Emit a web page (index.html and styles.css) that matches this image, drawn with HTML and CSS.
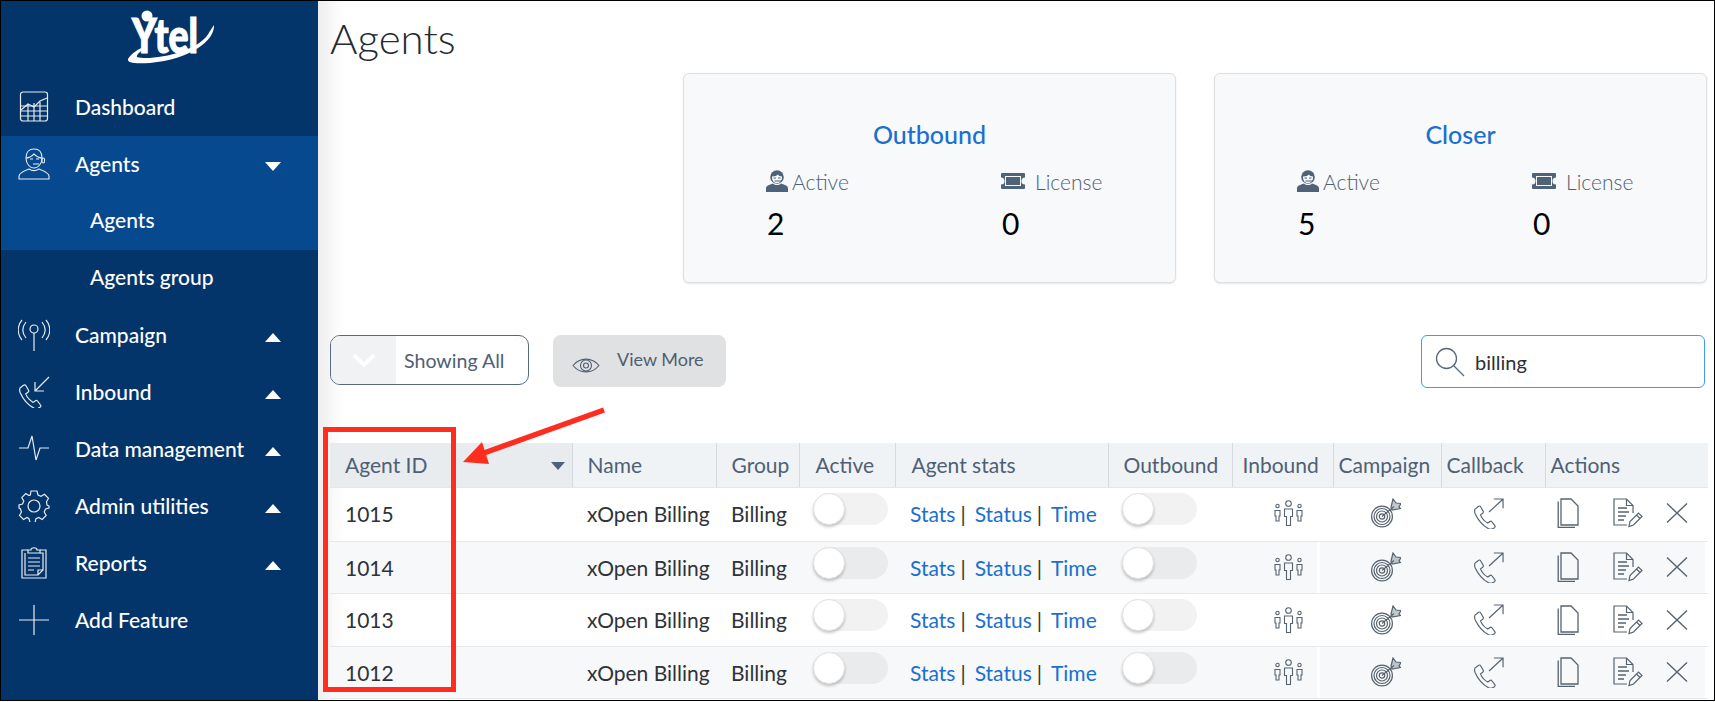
FILE: index.html
```html
<!DOCTYPE html>
<html lang="en">
<head>
<meta charset="utf-8">
<title>Agents</title>
<link rel="stylesheet" href="styles.css">
</head>
<body>
<svg class="sprite" aria-hidden="true">
  <symbol id="i-people" viewBox="0 0 30 26"><g fill="none" stroke="currentColor" stroke-width="1.100"><circle cx="14.500" cy="3.500" r="2.800"/><path d="M10.500 9h8v7.500h-2v9h-4v-9h-2z"/><circle cx="3.500" cy="6" r="1.700"/><path d="M1 10.500h5v5.500H5v5H2v-5H1z"/><circle cx="25.500" cy="6" r="1.700"/><path d="M23 10.500h5v5.500h-1v5h-3v-5h-1z"/></g></symbol>
  <symbol id="i-target" viewBox="0 0 30 30"><g fill="none" stroke="currentColor" stroke-width="1.200"><circle cx="11" cy="18.500" r="10.400"/><circle cx="11" cy="18.500" r="8"/><circle cx="11" cy="18.500" r="5.500"/><circle cx="11" cy="18.500" r="2.700"/><path d="M11 18.500L23 8.500"/><path d="M20 9l2-8 3 4 5 .5-2 3.500 1.500 1.500-8.500 1.500z" fill="currentColor" fill-opacity=".35"/></g></symbol>
  <symbol id="i-callout" viewBox="0 0 32 32"><g fill="none" stroke="currentColor" stroke-width="1.200"><path d="M1.500 11.500l3.500-2.800c1-.7 2-.5 2.500.5l2.500 4.500c.4.800.2 1.500-.5 2l-2.300 1.700c1 2.500 4 6.500 7.500 8.500l2.300-1.700c.7-.5 1.500-.4 2 .3l3 4c.5.800.4 1.600-.3 2.100l-2 1.200c-1 .7-2.500.7-4 0-6-3-11-9-14-15.500-.7-2-.7-3.500-.2-4.800z"/><path d="M16 14.500L30 1.500M21 1h9.500v9.500"/></g></symbol>
  <symbol id="i-copy" viewBox="0 0 23 30"><g fill="none" stroke="currentColor" stroke-width="1.300"><path d="M4 1h10l7 7v19H4z"/><path d="M1.200 3.500v25.800H18"/></g></symbol>
  <symbol id="i-edit" viewBox="0 0 30 30"><g fill="none" stroke="currentColor" stroke-width="1.200"><path d="M20 15V7.500L13.500 1H1v26h13"/><path d="M13.500 1v6.500H20"/><path d="M5 10h9M5 14h11M5 18h8M5 22h6" stroke-width="1.400"/><path d="M16 28.500l1-5 8.500-8.500 3.500 3.500-8.500 8.500zM23.500 17l3.500 3.500"/></g></symbol>
  <symbol id="i-close" viewBox="0 0 22 20"><path d="M1 .5l20 19M21 .5l-20 19" fill="none" stroke="currentColor" stroke-width="1.400"/></symbol>
  <symbol id="i-agent-solid" viewBox="0 0 22 22"><circle cx="11" cy="7" r="6.800" fill="currentColor"/><path d="M6 6.500c3 0 5-1 6-2 .5 1 2 2 4 2 .3 4-1.500 6.500-5 6.500S6 10.500 6 6.500z" fill="#f8f9fb"/><path d="M7.500 8h2.500M12 8h2.500M8.500 11h7.500" stroke="currentColor" fill="none"/><path d="M0 22v-3.500c0-3 3-3.500 7-5 2 2 6 2 8 0 4 1.500 7 2 7 5V22z" fill="currentColor"/></symbol>
  <symbol id="i-ticket" viewBox="0 0 24 16"><path fill-rule="evenodd" d="M1 0h22a1 1 0 011 1v3.500a2 2 0 000 7V15a1 1 0 01-1 1H1a1 1 0 01-1-1v-3.500a2 2 0 000-7V1a1 1 0 011-1zM4 3v10h16V3z" fill="currentColor"/><rect x="5" y="4" width="14" height="8" fill="currentColor"/></symbol>
</svg>

<div class="frame">
  <aside class="sidebar">
    <div class="logo">
      <svg width="100" height="70" viewBox="120 0 100 70">
        <circle cx="147" cy="15" r="5.500" fill="#fff"/>
        <text x="132" y="52" textLength="66" lengthAdjust="spacingAndGlyphs" class="logo-word">Ytel</text>
        <path d="M128 58c4-6 10-10 18-13v2c-6 3-10 7-9 9 13 4 63-4 73-26l4-6c1 16-24 34-64 38-15 1-23 0-22-4z" fill="#fff"/>
      </svg>
    </div>
    <nav class="nav">
      <a class="nav-item"><svg class="nav-icon" viewBox="0 0 32 32"><g fill="none" stroke="currentColor" stroke-width="1.200"><rect x="2.500" y="1" width="27" height="29" rx="2.500"/><path d="M3 15h26M3 20h26M3 25h26M10 13v17M16 12v18M22 11v19"/><path d="M3 19l7-6 6 3 6-6 7-3"/></g></svg><span>Dashboard</span></a>
      <div class="nav-open">
        <a class="nav-item"><svg class="nav-icon" viewBox="0 0 32 32"><g fill="none" stroke="currentColor" stroke-width="1.100"><path d="M8 10c0-6 3-9 8-9s8 3 8 9c0 6-4 10-8 10s-8-4-8-10z"/><path d="M8 10c4 0 6-2 8-4 2 2 4 4 8 4"/><path d="M12 11h3M18 11h3M15 16h6"/><rect x="24" y="10" width="2.500" height="5" rx="1.200"/><path d="M1 31v-3c0-3 5-5 10-7 3 2 7 2 10 0 5 2 10 4 10 7v3z"/></g></svg><span>Agents</span><i class="caret caret-down"></i></a>
        <a class="nav-item nav-sub"><span>Agents</span></a>
      </div>
      <a class="nav-item nav-sub"><span>Agents group</span></a>
      <a class="nav-item"><svg class="nav-icon" viewBox="0 0 32 32"><g fill="none" stroke="currentColor" stroke-width="1.200"><circle cx="16" cy="10" r="4"/><path d="M16 14v18M8 3C4 8 4 14 8 19M24 3c4 5 4 11 0 16M4 1C-1 7-1 15 4 21M28 1c5 6 5 14 0 20"/></g></svg><span>Campaign</span><i class="caret caret-up"></i></a>
      <a class="nav-item"><svg class="nav-icon" viewBox="0 0 32 32"><g fill="none" stroke="currentColor" stroke-width="1.200"><path d="M2 12l3.500-2.800c1-.7 2-.5 2.500.5l2.500 4.500c.4.800.2 1.500-.5 2l-2.300 1.700c1 2.500 4 6.500 7.500 8.500l2.300-1.700c.7-.5 1.500-.4 2 .3l3 4c.5.800.4 1.600-.3 2.100l-2 1.200c-1 .7-2.500.7-4 0-6-3-11-9-14-15.500-.7-2-.7-3.500-.2-4.800z"/><path d="M31 1L17 15M17 6v9h9"/></g></svg><span>Inbound</span><i class="caret caret-up"></i></a>
      <a class="nav-item"><svg class="nav-icon" viewBox="0 0 32 32"><path d="M1 15h9l4-12 4 24 4-12h9" fill="none" stroke="currentColor" stroke-width="1.200"/></svg><span>Data management</span><i class="caret caret-up"></i></a>
      <a class="nav-item"><svg class="nav-icon" viewBox="0 0 32 32"><g fill="none" stroke="currentColor" stroke-width="1.200"><circle cx="16" cy="16" r="6"/><path d="M13 1h6l1 4 3 1.300 3.500-2 4 4-2 3.500L29 15l2 1v0l0 2-3.500 1-1.300 3 2 3.500-4 4-3.500-2-2.700 1.200-1 3.800h-5l-1-3.800L9 27.500l-3.500 2-4-4 2-3.500L2.500 19 1 18v-3l3.500-1 1.300-3-2-3.500 4-4L11 5.500l1.300-.5z"/></g></svg><span>Admin utilities</span><i class="caret caret-up"></i></a>
      <a class="nav-item"><svg class="nav-icon" viewBox="0 0 32 32"><g fill="none" stroke="currentColor" stroke-width="1.200"><path d="M10 3H4v28h24V3h-6"/><path d="M7 6v22h13l5-5V6h-3"/><path d="M10 6V3h3c0-3 6-3 6 0h3v3z"/><path d="M10 11h12M10 15h12M10 19h12M10 23h6M20 28v-5h5"/></g></svg><span>Reports</span><i class="caret caret-up"></i></a>
      <a class="nav-item"><svg class="nav-icon" viewBox="0 0 32 32"><path d="M16 1v30M1 16h30" fill="none" stroke="currentColor" stroke-width="1.200"/></svg><span>Add Feature</span></a>
    </nav>
  </aside>

  <main class="main">
    <h1 class="title">Agents</h1>
    <section class="cards">
      <article class="card">
        <h2 class="card-title">Outbound</h2>
        <div class="card-grid">
          <div class="stat-label"><svg class="stat-agent"><use href="#i-agent-solid"/></svg>Active</div>
          <div class="stat-label stat-license"><svg class="stat-ticket"><use href="#i-ticket"/></svg>License</div>
          <div class="stat-num">2</div>
          <div class="stat-num">0</div>
        </div>
      </article>
      <article class="card">
        <h2 class="card-title">Closer</h2>
        <div class="card-grid">
          <div class="stat-label"><svg class="stat-agent"><use href="#i-agent-solid"/></svg>Active</div>
          <div class="stat-label stat-license"><svg class="stat-ticket"><use href="#i-ticket"/></svg>License</div>
          <div class="stat-num">5</div>
          <div class="stat-num">0</div>
        </div>
      </article>
    </section>

    <section class="toolbar">
      <button class="btn-show"><span class="btn-show-icon"><svg width="24" height="15" viewBox="0 0 24 15"><path d="M2 2l10 10L22 2" fill="none" stroke="#fff" stroke-width="4"/></svg></span><span class="btn-show-text">Showing All</span></button>
      <button class="btn-more"><svg width="28" height="17" viewBox="0 0 28 17"><g fill="none" stroke="#4f5f70" stroke-width="1.100"><path d="M1 8.500C8 0 20 0 27 8.500 20 17 8 17 1 8.500z"/><circle cx="14" cy="8.500" r="5.500"/><circle cx="14" cy="8.500" r="2.500"/></g></svg><span>View More</span></button>
      <label class="search"><svg width="30" height="30" viewBox="0 0 30 30"><g fill="none" stroke="#5a6876" stroke-width="1.300"><circle cx="11.500" cy="11.500" r="10"/><path d="M18.500 18.500L29 29"/></g></svg><span>billing</span></label>
    </section>

    <table class="agents">
      <colgroup>
        <col class="c-id"><col class="c-name"><col class="c-group"><col class="c-active"><col class="c-stats"><col class="c-out"><col class="c-in"><col class="c-camp"><col class="c-call"><col class="c-act">
      </colgroup>
      <thead>
        <tr>
          <th class="th-id">Agent ID<i class="sort-caret"></i></th>
          <th class="p15">Name</th>
          <th class="p15">Group</th>
          <th class="p16">Active</th>
          <th class="p16">Agent stats</th>
          <th class="p15">Outbound</th>
          <th class="p10">Inbound</th>
          <th class="p5">Campaign</th>
          <th class="p5">Callback</th>
          <th class="p5">Actions</th>
        </tr>
      </thead>
      <tbody>
        <tr>
          <td class="td-id">1015</td><td class="p15">xOpen Billing</td><td class="p15">Billing</td>
          <td class="p14"><span class="toggle"></span></td>
          <td class="p15"><a class="lnk">Stats</a><span class="sep">|</span><a class="lnk">Status</a><span class="sep">|</span><a class="lnk">Time</a></td>
          <td class="p14"><span class="toggle"></span></td>
          <td class="td-in"><svg class="ic-people"><use href="#i-people"/></svg></td>
          <td class="td-camp"><svg class="ic-target"><use href="#i-target"/></svg></td>
          <td class="td-call"><svg class="ic-call"><use href="#i-callout"/></svg></td>
          <td class="td-act"><div class="acts"><svg class="ic-copy"><use href="#i-copy"/></svg><svg class="ic-edit"><use href="#i-edit"/></svg><svg class="ic-close"><use href="#i-close"/></svg></div></td>
        </tr>
        <tr>
          <td class="td-id">1014</td><td class="p15">xOpen Billing</td><td class="p15">Billing</td>
          <td class="p14"><span class="toggle"></span></td>
          <td class="p15"><a class="lnk">Stats</a><span class="sep">|</span><a class="lnk">Status</a><span class="sep">|</span><a class="lnk">Time</a></td>
          <td class="p14"><span class="toggle"></span></td>
          <td class="td-in"><svg class="ic-people"><use href="#i-people"/></svg></td>
          <td class="td-camp"><svg class="ic-target"><use href="#i-target"/></svg></td>
          <td class="td-call"><svg class="ic-call"><use href="#i-callout"/></svg></td>
          <td class="td-act"><div class="acts"><svg class="ic-copy"><use href="#i-copy"/></svg><svg class="ic-edit"><use href="#i-edit"/></svg><svg class="ic-close"><use href="#i-close"/></svg></div></td>
        </tr>
        <tr>
          <td class="td-id">1013</td><td class="p15">xOpen Billing</td><td class="p15">Billing</td>
          <td class="p14"><span class="toggle"></span></td>
          <td class="p15"><a class="lnk">Stats</a><span class="sep">|</span><a class="lnk">Status</a><span class="sep">|</span><a class="lnk">Time</a></td>
          <td class="p14"><span class="toggle"></span></td>
          <td class="td-in"><svg class="ic-people"><use href="#i-people"/></svg></td>
          <td class="td-camp"><svg class="ic-target"><use href="#i-target"/></svg></td>
          <td class="td-call"><svg class="ic-call"><use href="#i-callout"/></svg></td>
          <td class="td-act"><div class="acts"><svg class="ic-copy"><use href="#i-copy"/></svg><svg class="ic-edit"><use href="#i-edit"/></svg><svg class="ic-close"><use href="#i-close"/></svg></div></td>
        </tr>
        <tr>
          <td class="td-id">1012</td><td class="p15">xOpen Billing</td><td class="p15">Billing</td>
          <td class="p14"><span class="toggle"></span></td>
          <td class="p15"><a class="lnk">Stats</a><span class="sep">|</span><a class="lnk">Status</a><span class="sep">|</span><a class="lnk">Time</a></td>
          <td class="p14"><span class="toggle"></span></td>
          <td class="td-in"><svg class="ic-people"><use href="#i-people"/></svg></td>
          <td class="td-camp"><svg class="ic-target"><use href="#i-target"/></svg></td>
          <td class="td-call"><svg class="ic-call"><use href="#i-callout"/></svg></td>
          <td class="td-act"><div class="acts"><svg class="ic-copy"><use href="#i-copy"/></svg><svg class="ic-edit"><use href="#i-edit"/></svg><svg class="ic-close"><use href="#i-close"/></svg></div></td>
        </tr>
      </tbody>
    </table>
  </main>

  <div class="mark-box"></div>
  <svg class="mark-arrow" width="150" height="60" viewBox="460 405 150 60"><path d="M604 410L484 453" stroke="#ff2d1f" stroke-width="5.500" fill="none"/><path d="M463 462l19-20 7 22z" fill="#ff2d1f"/></svg>
</div>
</body>
</html>
```

FILE: styles.css
```css
* { box-sizing: border-box; }
html, body { margin: 0; padding: 0; background: #fff; }
body { font-family: "Lato", "Liberation Sans", sans-serif; overflow: hidden; }
.sprite { display: none; }

.frame {
  position: relative;
  display: flex;
  width: 1715px;
  height: 701px;
  border: 1px solid #000;
  overflow: hidden;
}

/* Sidebar */
.sidebar {
  flex: 0 0 317px;
  background: #04356a;
  color: #fff;
}
.logo { height: 78px; padding-left: 119px; }
.logo svg { display: block; }
.logo-word {
  font-family: "Lato", sans-serif;
  font-weight: 900;
  font-size: 48px;
  fill: #fff;
  stroke: #fff;
  stroke-width: 1.200px;
}
.nav-open { background: #07498e; }
.nav-item {
  position: relative;
  display: flex;
  align-items: center;
  height: 57px;
  padding-left: 74px;
  padding-bottom: 3px;
  font-size: 21px;
  font-weight: 500;
  color: #fff;
}
.nav-sub { padding-left: 89px; padding-bottom: 4px; }
.nav-icon {
  position: absolute;
  left: 17px;
  top: 12px;
  width: 32px;
  height: 32px;
  color: #e6ebf1;
}
.caret {
  position: absolute;
  left: 264px;
  width: 0;
  height: 0;
  border-left: 8px solid transparent;
  border-right: 8px solid transparent;
}
.caret-down { top: 26px; border-top: 9px solid #fff; }
.caret-up { top: 26px; border-bottom: 9px solid #fff; }

/* Main */
.main {
  flex: 1;
  min-width: 0;
  padding: 0 5px 0 12px;
  background: linear-gradient(90deg, #ededed 0, #fbfbfb 18px, #fff 28px);
}
.title {
  margin: 0;
  height: 72px;
  padding-top: 7px;
  font-size: 42px;
  line-height: 60px;
  font-weight: 300;
  color: #222a33;
}

.cards {
  display: flex;
  justify-content: flex-end;
  gap: 38px;
  padding-right: 2px;
}
.card {
  width: 493px;
  height: 210px;
  padding-top: 43px;
  background: #f8f9fb;
  border: 1px solid #dedfe0;
  border-radius: 6px;
  box-shadow: 0 1px 2px rgba(0, 0, 0, .1);
}
.card-title {
  margin: 0 0 15px;
  text-align: center;
  font-size: 25px;
  line-height: 34px;
  font-weight: 500;
  color: #1a6fd0;
}
.card-grid {
  display: grid;
  grid-template-columns: 235px 1fr;
  row-gap: 11px;
  padding-left: 82px;
}
.stat-label {
  display: flex;
  align-items: center;
  height: 30px;
  font-size: 21px;
  font-weight: 300;
  color: #4f6074;
}
.stat-agent { width: 22px; height: 22px; margin-right: 4px; color: #4f6378; }
.stat-ticket { width: 24px; height: 16px; margin-right: 10px; color: #4f6378; }
.stat-num {
  height: 32px;
  padding-left: 1px;
  font-size: 30px;
  line-height: 32px;
  color: #000;
}

.toolbar {
  display: flex;
  align-items: flex-start;
  margin-top: 52px;
  height: 108px;
  padding-right: 4px;
}
.btn-show {
  display: flex;
  width: 199px;
  height: 50px;
  padding: 0;
  background: #fff;
  border: 1.500px solid #566a7f;
  border-radius: 10px;
  overflow: hidden;
  font: inherit;
}
.btn-show-icon {
  display: flex;
  align-items: center;
  justify-content: center;
  flex: 0 0 65px;
  height: 100%;
  background: #f1f2f4;
}
.btn-show-text {
  align-self: center;
  padding-left: 8px;
  font-size: 19.600px;
  color: #4f6074;
}
.btn-more {
  display: flex;
  align-items: flex-start;
  width: 173px;
  height: 52px;
  margin-left: 24px;
  padding: 0 0 0 19px;
  background: #e0e1e3;
  border: 0;
  border-radius: 8px;
  font: inherit;
  font-size: 18px;
  color: #4f5f70;
}
.btn-more svg { margin-top: 22px; }
.btn-more span { margin: 12px 0 0 17px; line-height: 24px; }
.search {
  display: flex;
  align-items: center;
  width: 284px;
  height: 53px;
  margin-left: auto;
  padding-left: 13px;
  background: #fff;
  border: 1px solid #3d9bf5;
  border-radius: 6px;
  font-size: 20px;
  color: #2d2f33;
}
.search span { margin-left: 10px; }

/* Table */
.agents {
  width: 1378px;
  border-collapse: collapse;
  table-layout: fixed;
  font-size: 21px;
}
.c-id { width: 242px; }
.c-name { width: 144px; }
.c-group { width: 83px; }
.c-active { width: 96px; }
.c-stats { width: 213px; }
.c-out { width: 124px; }
.c-in { width: 101px; }
.c-camp { width: 108px; }
.c-call { width: 104px; }
.c-act { width: 163px; }

.agents th {
  height: 44px;
  padding-top: 0;
  padding-bottom: 0;
  text-align: left;
  font-weight: 400;
  color: #4f6074;
  background: #f0f3f6;
  border-right: 1px solid #d5dade;
  border-bottom: 1px solid #e3e7ea;
  white-space: nowrap;
}
.agents th:last-child { border-right: 0; }
.agents .th-id {
  position: relative;
  padding-left: 15px;
  background: #e8ecef;
}
.sort-caret {
  position: absolute;
  left: 221px;
  top: 19px;
  width: 0;
  height: 0;
  border-left: 7.500px solid transparent;
  border-right: 7.500px solid transparent;
  border-top: 8px solid #4f6378;
}
.agents td {
  padding-top: 0;
  padding-bottom: 0;
  color: #2f3338;
  border-bottom: 1px solid #e6e9ec;
  white-space: nowrap;
}
.agents tbody tr:nth-child(1) { height: 54px; }
.agents tbody tr:nth-child(1) td { padding-bottom: 2px; }
.agents tbody tr:nth-child(2) { height: 52px; }
.agents tbody tr:nth-child(3) { height: 53px; }
.agents tbody tr:nth-child(4) { height: 52px; }
.agents tbody tr:nth-child(even) td { background: #f6f8fa; }
.agents tbody tr:nth-child(even) .td-in {
  background: linear-gradient(90deg, #f6f8fa 85px, #fff 85px, #fff 88px, #f6f8fa 88px);
}
.agents tbody tr:nth-child(even) .td-act {
  background: linear-gradient(90deg, #f6f8fa 160px, #fff 160px);
}

.agents .p5 { padding-left: 5px; }
.agents .p10 { padding-left: 10px; }
.agents .p14 { padding-left: 14px; }
.agents .p15 { padding-left: 15px; }
.agents .p16 { padding-left: 16px; }
.agents .td-id { padding-left: 15px; }
.agents .td-in { padding-left: 42px; }
.agents .td-camp { padding-left: 38px; }
.agents .td-call { padding-left: 32px; }
.agents .td-act { padding-left: 12px; }

.lnk { color: #1a6fd0; }
.sep { display: inline-block; margin: 0 9px 0 5px; color: #333; }

.toggle {
  position: relative;
  display: block;
  width: 75px;
  height: 32px;
  margin-top: -9px;
  border-radius: 16px;
  background: #f2f2f2;
}
tr:nth-child(even) .toggle { background: #e9ebed; }
.toggle::after {
  content: "";
  position: absolute;
  left: 0;
  top: 0;
  width: 30px;
  height: 30px;
  border-radius: 50%;
  background: #fff;
  border: 1px solid #e3e3e3;
  box-shadow: 0 2px 3px rgba(0, 0, 0, .22);
}

.agents svg { display: block; color: #56636f; }
.ic-people { width: 30px; height: 26px; }
.ic-target { width: 30px; height: 30px; }
.ic-call { width: 32px; height: 31px; }
.acts { display: flex; align-items: center; }
.ic-copy { width: 23px; height: 30px; }
.ic-edit { width: 30px; height: 30px; margin-left: 33px; }
.ic-close { width: 22px; height: 20px; margin-left: 23px; }

/* Annotation overlay */
.mark-box {
  position: absolute;
  left: 322px;
  top: 426px;
  width: 133px;
  height: 265px;
  border: 5px solid #ff2d1f;
}
.mark-arrow {
  position: absolute;
  left: 459px;
  top: 404px;
}
```
